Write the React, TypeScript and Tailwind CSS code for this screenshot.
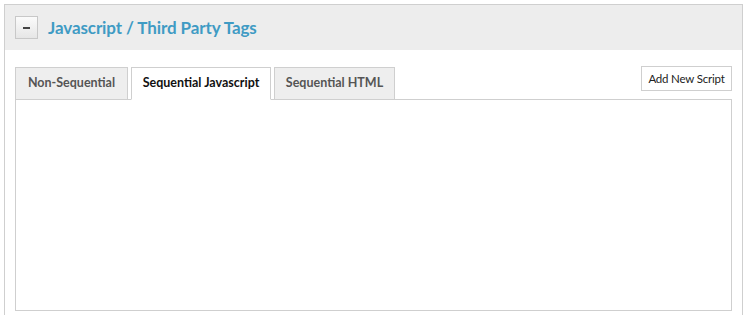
import React, { useState } from 'react';

const tabs = ['Non-Sequential', 'Sequential Javascript', 'Sequential HTML'];

const App: React.FC = () => {
    const [active, setActive] = useState(1);
    const [open, setOpen] = useState(true);

    return (
        <div className="bg-white h-[315px] overflow-hidden pt-1 pl-1 font-['Lato',sans-serif]">
            <div className="w-[739px] h-[330px] border border-[#cfcfcf] bg-white">
                {/* header */}
                <div className="h-[45px] bg-[#ededed] flex items-center pl-[10px]">
                    <button
                        onClick={() => setOpen(!open)}
                        className="w-[23px] h-[23px] border border-[#c8c8c8] bg-gradient-to-b from-[#fbfbfb] to-[#e6e6e6] flex items-center justify-center"
                    >
                        <span className="block w-[7px] h-[2px] bg-[#444]" />
                    </button>
                    <h2 className="ml-[10px] text-[17px] font-bold text-[#3f9bc4] tracking-[-0.1px]">
                        Javascript / Third Party Tags
                    </h2>
                </div>

                {open && (
                    <div className="px-[10px] pt-[16px]">
                        <div className="flex items-end justify-between">
                            <div className="flex gap-[3px]">
                                {tabs.map((t, i) => (
                                    <button
                                        key={t}
                                        onClick={() => setActive(i)}
                                        className={`h-[33px] border border-[#cfcfcf] text-[12.5px] font-bold -mb-px ${
                                            i === active
                                                ? 'bg-white text-[#111] border-b-white'
                                                : 'bg-[#eeeeee] text-[#555]'
                                        } ${i === 0 ? 'w-[113px]' : i === 1 ? 'w-[140px]' : 'w-[121px]'}`}
                                    >
                                        {t}
                                    </button>
                                ))}
                            </div>
                            <button className="mb-[8px] h-[25px] w-[91px] border border-[#cfcfcf] bg-white text-[11.5px] text-[#222] tracking-[-0.2px]">
                                Add New Script
                            </button>
                        </div>
                        <div className="h-[212px] border border-[#cfcfcf] bg-white" />
                    </div>
                )}
            </div>
        </div>
    );
};

export default App;
